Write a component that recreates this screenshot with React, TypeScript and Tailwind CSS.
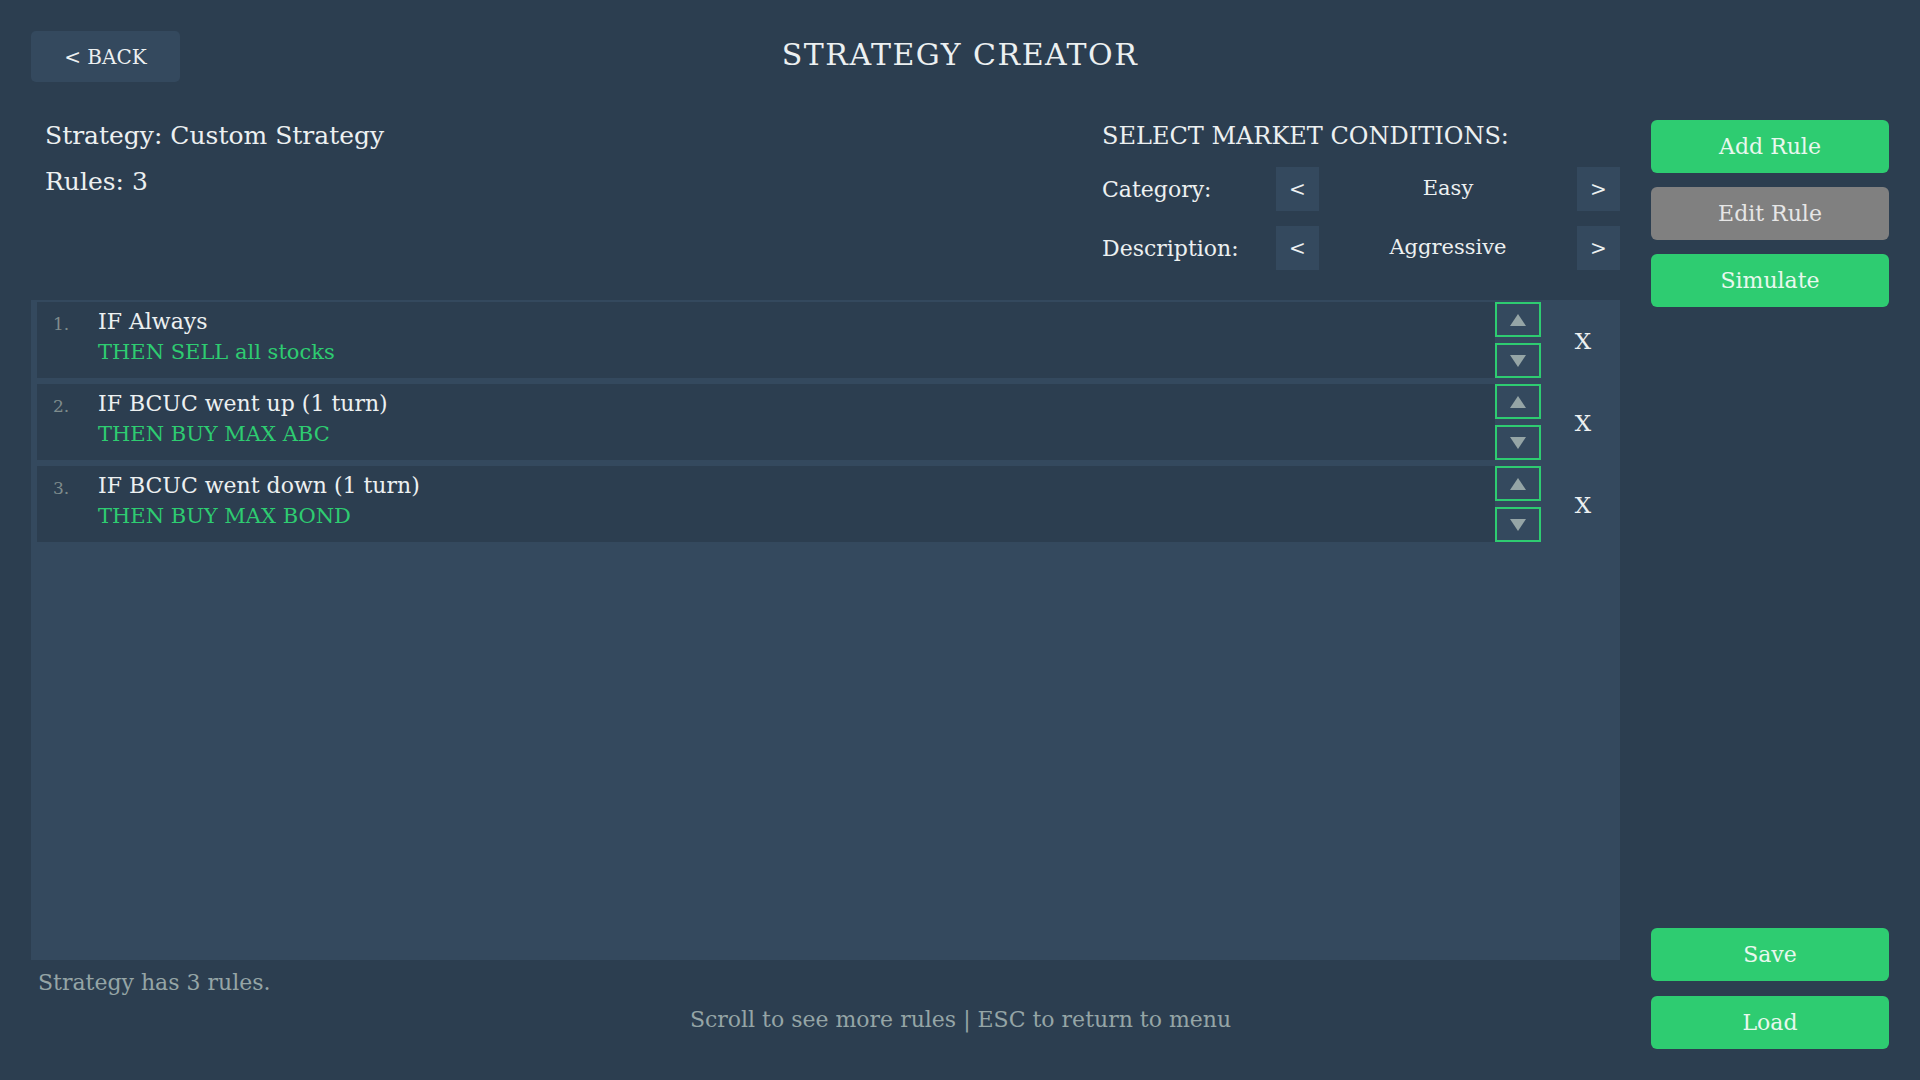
import React from "react";

type Rule = {
  condition: string;
  action: string;
};

const rules: Rule[] = [
  { condition: "IF Always", action: "THEN SELL all stocks" },
  { condition: "IF BCUC went up (1 turn)", action: "THEN BUY MAX ABC" },
  { condition: "IF BCUC went down (1 turn)", action: "THEN BUY MAX BOND" },
];

const serif = { fontFamily: '"DejaVu Serif", "Liberation Serif", serif' };

function Picker({ label, value }: { label: string; value: string }) {
  return (
    <div className="grid grid-cols-[174px_43px_1fr_43px] items-center h-[44px]">
      <span className="text-[22px] text-[#ecf0f1]">{label}</span>
      <button className="h-[44px] bg-[#34495e] text-[#ecf0f1] text-[20px]">&lt;</button>
      <span className="text-center text-[21px] text-[#ecf0f1]">{value}</span>
      <button className="h-[44px] bg-[#34495e] text-[#ecf0f1] text-[20px]">&gt;</button>
    </div>
  );
}

function MoveButton({ up }: { up?: boolean }) {
  return (
    <button className="w-[46px] h-[35px] border-2 border-[#2ecc71] bg-[#34495e] flex items-center justify-center">
      <svg width="16" height="12" viewBox="0 0 16 12">
        {up ? (
          <polygon points="8,0 16,12 0,12" fill="#95a5a6" />
        ) : (
          <polygon points="0,0 16,0 8,12" fill="#95a5a6" />
        )}
      </svg>
    </button>
  );
}

function RuleRow({ rule, index }: { rule: Rule; index: number }) {
  return (
    <div className="flex h-[76px]">
      <div className="flex-1 bg-[#2c3e50] flex pl-[16px] pt-[5px]">
        <span className="w-[45px] text-[17px] text-[#7f8c8d] pt-[5px]">{index + 1}.</span>
        <div className="flex flex-col leading-[30px]">
          <span className="text-[22px] text-[#ecf0f1]">{rule.condition}</span>
          <span className="text-[21px] text-[#2ecc71]">{rule.action}</span>
        </div>
      </div>
      <div className="flex flex-col justify-between">
        <MoveButton up />
        <MoveButton />
      </div>
      <div className="w-[79px] flex items-center justify-center text-[23px] text-[#ecf0f1] pt-[3px] pl-[5px]">X</div>
    </div>
  );
}

function SideButton({ label, gray }: { label: string; gray?: boolean }) {
  return (
    <button
      className={
        gray
          ? "h-[53px] w-full rounded-[6px] bg-[#808080] text-[22px] text-[#e6e6e6]"
          : "h-[53px] w-full rounded-[6px] bg-[#2ecc71] text-[22px] text-[#e8f8ee]"
      }
    >
      {label}
    </button>
  );
}

export default function App() {
  return (
    <div className="w-[1920px] h-[1080px] bg-[#2c3e50] overflow-hidden px-[31px]" style={serif}>
      {/* header */}
      <div className="grid grid-cols-[1fr_auto_1fr] items-start pt-[31px] h-[120px]">
        <div>
          <button className="w-[149px] h-[51px] rounded-[5px] bg-[#34495e] text-[20px] text-[#ecf0f1]">
            &lt; BACK
          </button>
        </div>
        <h1 className="text-[30px] text-[#ecf0f1] tracking-[1.5px] leading-[48px]">STRATEGY CREATOR</h1>
        <div />
      </div>

      <div className="flex gap-[31px]">
        {/* left column */}
        <div className="flex-1 flex flex-col">
          <div className="flex justify-between h-[180px]">
            <div className="pl-[14px] flex flex-col leading-[32px] text-[25px] text-[#ecf0f1]">
              <span>Strategy: Custom Strategy</span>
              <span className="mt-[14px]">Rules: 3</span>
            </div>
            <div className="w-[518px] flex flex-col">
              <span className="text-[24px] text-[#ecf0f1] leading-[32px]">SELECT MARKET CONDITIONS:</span>
              <div className="mt-[15px] flex flex-col gap-[15px]">
                <Picker label="Category:" value="Easy" />
                <Picker label="Description:" value="Aggressive" />
              </div>
            </div>
          </div>

          <div className="h-[660px] bg-[#34495e] pl-[6px] pt-[2px] flex flex-col gap-[6px]">
            {rules.map((rule, i) => (
              <RuleRow key={i} rule={rule} index={i} />
            ))}
          </div>

          <div className="pl-[7px] pt-[9px] text-[22px] text-[#95a5a6] leading-[28px]">Strategy has 3 rules.</div>
          <div className="pl-[270px] pt-[9px] text-center text-[22px] text-[#95a5a6] leading-[28px]">
            Scroll to see more rules | ESC to return to menu
          </div>
        </div>

        {/* right column */}
        <div className="w-[238px] flex flex-col h-[929px]">
          <div className="flex flex-col gap-[14px]">
            <SideButton label="Add Rule" />
            <SideButton label="Edit Rule" gray />
            <SideButton label="Simulate" />
          </div>
          <div className="mt-auto flex flex-col gap-[15px]">
            <SideButton label="Save" />
            <SideButton label="Load" />
          </div>
        </div>
      </div>
    </div>
  );
}
